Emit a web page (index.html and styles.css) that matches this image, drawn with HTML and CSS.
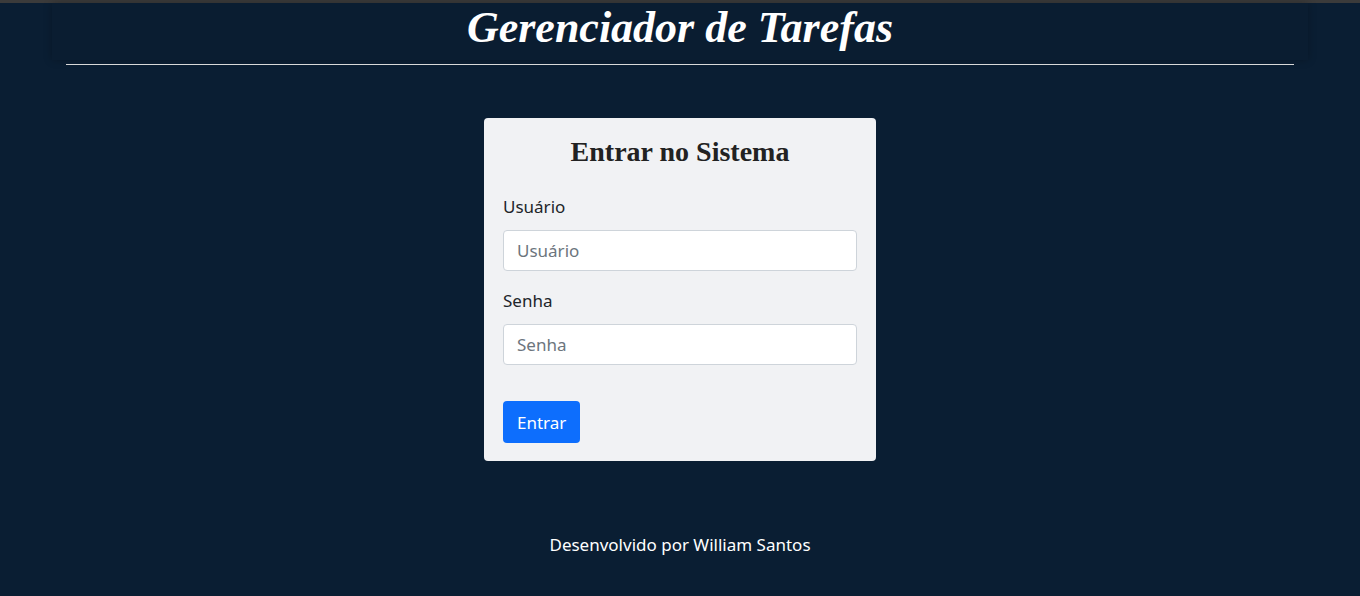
FILE: index.html
```html
<!DOCTYPE html>
<html lang="pt-br">
<head>
<meta charset="utf-8">
<title>Gerenciador de Tarefas</title>
<link rel="stylesheet" href="styles.css">
</head>
<body>
<div class="topbar"></div>
<header class="header">
  <h1 class="title">Gerenciador de Tarefas</h1>
</header>
<hr class="rule">
<main class="main">
  <form class="card">
    <h2 class="card-title">Entrar no Sistema</h2>
    <div class="field">
      <label class="label" for="u">Usuário</label>
      <input class="input" id="u" type="text" placeholder="Usuário">
    </div>
    <div class="field">
      <label class="label" for="s">Senha</label>
      <input class="input" id="s" type="password" placeholder="Senha">
    </div>
    <button class="btn" type="button">Entrar</button>
  </form>
</main>
<footer class="footer">Desenvolvido por William Santos</footer>
</body>
</html>
```
FILE: styles.css
```css
* { box-sizing: border-box; }
html, body { margin: 0; padding: 0; }
body {
  background: #0a1e33;
  font-family: "Noto Sans", "Open Sans", sans-serif;
  color: #fff;
  height: 596px;
  overflow: hidden;
}
.topbar { height: 3px; background: #3b3b3b; }
.header {
  margin: 0 52px;
  height: 57px;
  box-shadow: 0 0 8px rgba(0,0,0,0.25);
  background: #0a1d31;
  display: flex;
  justify-content: center;
}
.title {
  margin: 0;
  font-family: "Liberation Serif", "DejaVu Serif", serif;
  font-style: italic;
  font-weight: bold;
  font-size: 44px;
  line-height: 50px;
  color: #fff;
}
.rule {
  margin: 4px 66px 0;
  border: 0;
  border-top: 1px solid #d8d8d8;
  height: 0;
}
.main {
  display: flex;
  justify-content: center;
  padding-top: 53px;
}
.card {
  width: 392px;
  background: #f1f2f4;
  border-radius: 4px;
  padding: 16px 19px 18px;
  color: #212529;
}
.card-title {
  margin: 0 0 25px;
  text-align: center;
  font-family: "Liberation Serif", "DejaVu Serif", serif;
  font-weight: bold;
  font-size: 28px;
  line-height: 36px;
  color: #222;
}
.field { margin-bottom: 18px; }
.field:last-of-type { margin-bottom: 0; }
.label {
  display: block;
  font-size: 17px;
  line-height: 24px;
  margin-bottom: 11px;
  color: #212529;
}
.input {
  display: block;
  width: 100%;
  height: 41px;
  padding: 6px 13px;
  font-family: inherit;
  font-size: 17px;
  border: 1px solid #ced4da;
  border-radius: 4px;
  background: #fff;
  color: #212529;
}
.input::placeholder { color: #6c757d; }
.btn {
  display: block;
  margin-top: 36px;
  height: 42px;
  padding: 0 14px;
  background: #0d6efd;
  color: #fff;
  border: 0;
  border-radius: 4px;
  font-family: inherit;
  font-size: 17px;
}
.footer {
  text-align: center;
  font-size: 17px;
  line-height: 24px;
  margin-top: 72px;
  color: #fff;
}
```
